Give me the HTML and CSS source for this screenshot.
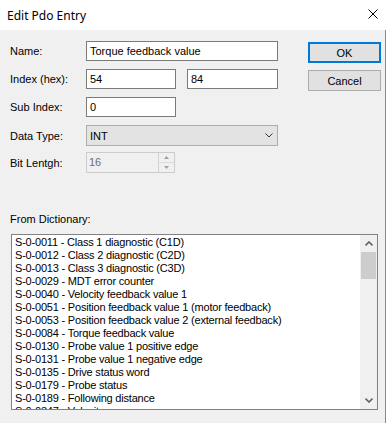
FILE: index.html
```html
<!DOCTYPE html>
<html>
<head>
<meta charset="utf-8">
<link rel="stylesheet" href="styles.css">
</head>
<body>
<div class="window">
  <div class="titlebar">
    <span class="title">Edit Pdo Entry</span>
    <svg class="close" width="10" height="10" viewBox="0 0 10 10"><path d="M0.5 0.5 L9.5 9.5 M9.5 0.5 L0.5 9.5" stroke="#000" stroke-width="1" fill="none"/></svg>
  </div>
  <div class="client">
    <div class="panel">
      <div class="top">
        <div class="fields">
          <div class="row">
            <span class="label">Name:</span>
            <div class="box wide">Torque feedback value</div>
          </div>
          <div class="row">
            <span class="label">Index (hex):</span>
            <div class="box half">54</div>
            <div class="box half second">84</div>
          </div>
          <div class="row">
            <span class="label">Sub Index:</span>
            <div class="box half">0</div>
          </div>
          <div class="row row-combo">
            <span class="label">Data Type:</span>
            <div class="combo">
              <span>INT</span>
              <svg width="8" height="5" viewBox="0 0 8 5"><polyline points="0.5,0.5 4,4 7.5,0.5" stroke="#333" stroke-width="1" fill="none"/></svg>
            </div>
          </div>
          <div class="row row-spin">
            <span class="label">Bit Lentgh:</span>
            <div class="spin">
              <span class="spin-val">16</span>
              <div class="spin-btns">
                <div class="spin-up"><svg width="5" height="3" viewBox="0 0 5 3"><polygon points="2.5,0 5,3 0,3" fill="#a0a0a0"/></svg></div>
                <div class="spin-down"><svg width="5" height="3" viewBox="0 0 5 3"><polygon points="0,0 5,0 2.5,3" fill="#a0a0a0"/></svg></div>
              </div>
            </div>
          </div>
        </div>
        <div class="buttons">
          <div class="btn ok">OK</div>
          <div class="btn cancel">Cancel</div>
        </div>
      </div>
      <div class="dict-label">From Dictionary:</div>
      <div class="listbox">
        <div class="items">
          <div class="item">S-0-0011 - Class 1 diagnostic (C1D)</div>
          <div class="item">S-0-0012 - Class 2 diagnostic (C2D)</div>
          <div class="item">S-0-0013 - Class 3 diagnostic (C3D)</div>
          <div class="item">S-0-0029 - MDT error counter</div>
          <div class="item">S-0-0040 - Velocity feedback value 1</div>
          <div class="item">S-0-0051 - Position feedback value 1 (motor feedback)</div>
          <div class="item">S-0-0053 - Position feedback value 2 (external feedback)</div>
          <div class="item">S-0-0084 - Torque feedback value</div>
          <div class="item">S-0-0130 - Probe value 1 positive edge</div>
          <div class="item">S-0-0131 - Probe value 1 negative edge</div>
          <div class="item">S-0-0135 - Drive status word</div>
          <div class="item">S-0-0179 - Probe status</div>
          <div class="item">S-0-0189 - Following distance</div>
          <div class="item">S-0-0347 - Velocity error</div>
        </div>
        <div class="scrollbar">
          <div class="sb-arrow"><svg width="8" height="5" viewBox="0 0 8 5"><polyline points="0.5,4.3 4,1 7.5,4.3" stroke="#606060" stroke-width="1.6" fill="none"/></svg></div>
          <div class="sb-thumb"></div>
          <div class="sb-track"></div>
          <div class="sb-arrow"><svg width="8" height="5" viewBox="0 0 8 5"><polyline points="0.5,0.7 4,4 7.5,0.7" stroke="#606060" stroke-width="1.6" fill="none"/></svg></div>
        </div>
      </div>
    </div>
  </div>
</div>
</body>
</html>
```
FILE: styles.css
```css
* { box-sizing: border-box; }
html, body { margin: 0; padding: 0; }
body {
  width: 389px;
  height: 423px;
  overflow: hidden;
  background: #fff;
  font-family: "Liberation Sans", Arial, sans-serif;
  font-size: 11px;
  color: #000;
}
.window {
  width: 389px;
  height: 423px;
  display: flex;
  flex-direction: column;
}
.titlebar {
  height: 30px;
  flex: none;
  display: flex;
  align-items: center;
  justify-content: space-between;
  padding-left: 7px;
  padding-right: 11px;
  background: #fff;
  font-family: "Noto Sans", sans-serif;
  font-size: 12px;
  color: #000;
}
.close { margin-top: -2px; }
.client {
  flex: 1;
  display: flex;
}
.panel {
  width: 386px;
  background: #f0f0f0;
  border-right: 1px solid #8a8a8a;
  padding: 11px 0 0 10px;
}
.top {
  display: flex;
}
.fields {
  width: 268px;
  display: flex;
  flex-direction: column;
}
.row {
  display: flex;
  align-items: center;
  height: 20px;
  margin-bottom: 8px;
}
.row-combo {
  height: 21px;
  margin-bottom: 6px;
}
.row-spin {
  height: 21px;
  margin-bottom: 0;
}
.label {
  width: 76px;
  flex: none;
  white-space: nowrap;
}
.box {
  height: 20px;
  background: #fff;
  border: 1px solid #7a7a7a;
  padding-left: 3px;
  line-height: 18px;
  white-space: nowrap;
}
.wide { width: 192px; }
.half { width: 90px; }
.second { margin-left: 11px; width: 91px; }
.combo {
  width: 192px;
  height: 21px;
  background: #e3e3e3;
  border: 1px solid #adadad;
  padding: 0 4px 0 3px;
  display: flex;
  align-items: center;
  justify-content: space-between;
}
.spin {
  width: 89px;
  height: 21px;
  border: 1px solid #cccccc;
  background: #f0f0f0;
  display: flex;
  align-items: stretch;
}
.spin-val {
  flex: 1;
  color: #6d6d6d;
  padding-left: 2px;
  line-height: 19px;
}
.spin-btns {
  width: 16px;
  border-left: 1px solid #d4d4d4;
  display: flex;
  flex-direction: column;
}
.spin-up, .spin-down {
  flex: 1;
  display: flex;
  align-items: center;
  justify-content: center;
}
.spin-up { border-bottom: 1px solid #dcdcdc; }
.buttons {
  margin-left: 30px;
  margin-top: 1px;
  display: flex;
  flex-direction: column;
}
.btn {
  width: 73px;
  height: 21px;
  background: #e1e1e1;
  border: 1px solid #adadad;
  display: flex;
  align-items: center;
  justify-content: center;
}
.ok { border: 2px solid #0078d7; }
.cancel { margin-top: 7px; }
.dict-label {
  margin-top: 40px;
  height: 13px;
  line-height: 13px;
}
.listbox {
  margin-top: 8px;
  margin-left: 1px;
  width: 367px;
  height: 176px;
  border: 1px solid #828282;
  background: #fff;
  display: flex;
}
.items {
  flex: 1;
  overflow: hidden;
  padding: 1px 0 0 3px;
}
.item {
  height: 13px;
  line-height: 13px;
  white-space: nowrap;
  letter-spacing: -0.2px;
}
.scrollbar {
  width: 17px;
  flex: none;
  background: #f0f0f0;
  display: flex;
  flex-direction: column;
}
.sb-arrow {
  height: 17px;
  display: flex;
  align-items: center;
  justify-content: center;
}
.sb-thumb {
  height: 27px;
  margin: 0 1px;
  background: #cdcdcd;
}
.sb-track { flex: 1; }
```
